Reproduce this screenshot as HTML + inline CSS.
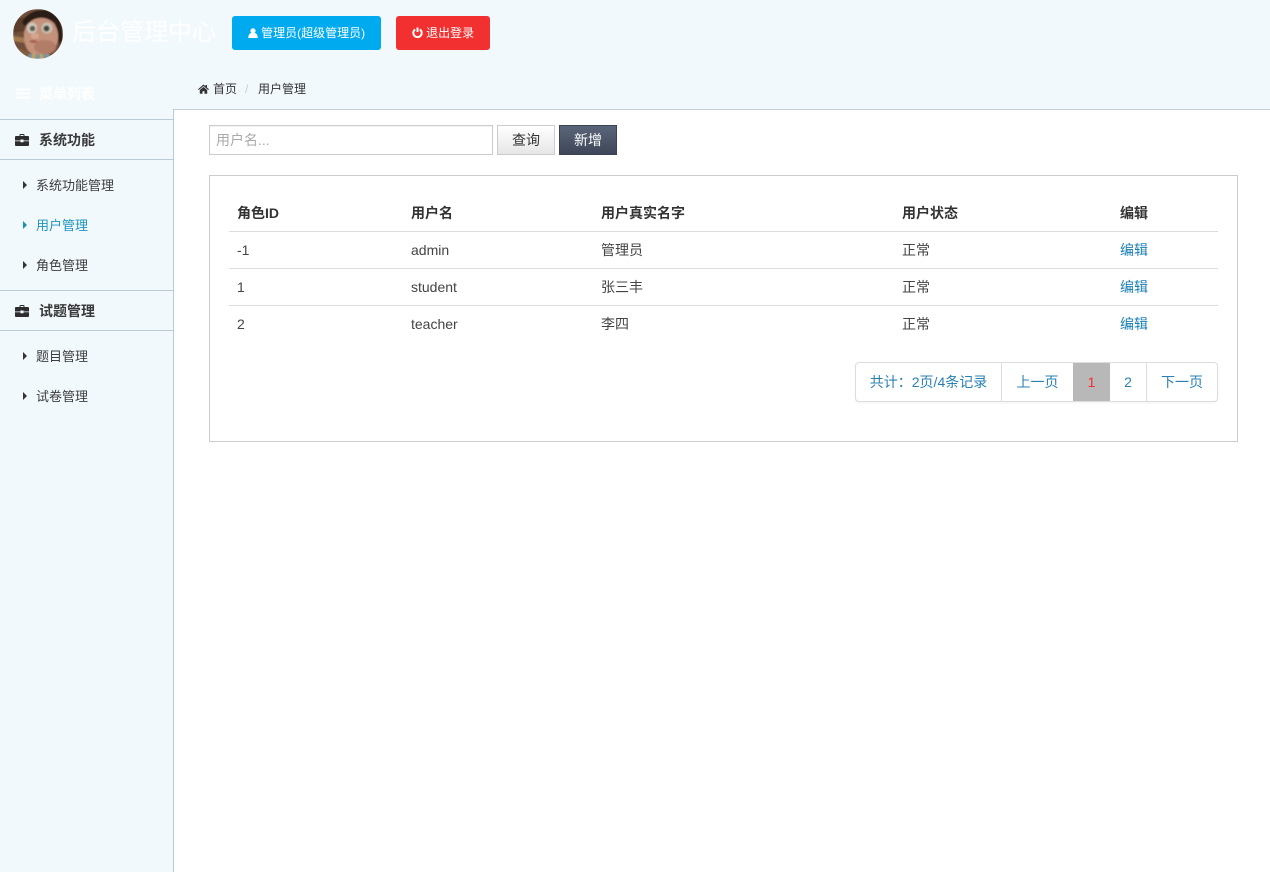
<!DOCTYPE html>
<html lang="zh">
<head>
<meta charset="utf-8">
<title>后台管理中心</title>
<style>
*{box-sizing:border-box}
html,body{margin:0;padding:0;width:1270px;height:872px;overflow:hidden;background:#f2f9fd;font-family:"Liberation Sans","Noto Sans CJK SC",sans-serif;font-size:14px;color:#333}
.a{position:absolute;white-space:nowrap}
.main{left:174px;top:110px;width:1096px;height:762px;background:#fff}
.vl{left:173px;top:109px;width:1px;height:763px;background:#b9cbd6}
.hl{left:173px;top:109px;width:1097px;height:1px;background:#c4ced4}
.sl{left:0;width:173px;height:1px;background:#b9cbd6}
.btn{height:34px;line-height:34px;border-radius:3px;color:#fff;font-size:12px;text-align:center}
.sh{left:39px;font-size:14px;font-weight:bold;line-height:20px;color:#3a3a3a}
.si{left:36px;font-size:13px;line-height:20px;color:#3d3d3d}
.tri{width:0;height:0;border-left:4px solid #333;border-top:4px solid transparent;border-bottom:4px solid transparent;left:23px}
.th{font-size:14px;font-weight:bold;line-height:20px;color:#333}
.td{font-size:14px;line-height:20px;color:#444}
.ln{left:229px;width:989px;height:1px;background:#ddd}
.lk{color:#1a7fb5}
.pg{left:855px;top:362px;width:363px;height:40px;border:1px solid #ddd;border-radius:4px;background:#fff;box-shadow:0 1px 2px rgba(0,0,0,.05)}
.pt{top:364px;height:36px;line-height:36px;font-size:14px;color:#2a80b3;text-align:center}
.ps{top:363px;width:1px;height:38px;background:#ddd}
</style>
</head>
<body>
<div class="a main"></div>
<div class="a vl"></div>
<div class="a hl"></div>

<svg class="a" style="left:13px;top:9px" width="50" height="50" viewBox="0 0 50 50">
<defs>
<clipPath id="c"><circle cx="25" cy="25" r="25"/></clipPath>
<filter id="b" x="-10%" y="-10%" width="120%" height="120%"><feGaussianBlur stdDeviation="0.8"/></filter>
</defs>
<g clip-path="url(#c)">
<g filter="url(#b)">
<rect width="50" height="50" fill="#71503a"/>
<path d="M0 10 L14 8 L12 22 L0 24Z" fill="#5a3d2c"/>
<path d="M0 27 L12 29 L13 34 L0 32Z" fill="#a67a50"/>
<path d="M0 38 L15 43 L15 50 L0 50Z" fill="#85603f"/>
<path d="M9 14 C13 3 26 -1 36 2 C46 6 50 16 50 30 L46 36 L42 14 C34 8 20 8 12 17Z" fill="#2a1d18"/>
<path d="M11 27 C11 15 20 8 30 9 C41 10 46 20 45 30 C44 41 34 48 25 47 C16 46 11 38 11 27Z" fill="#c4927a"/>
<ellipse cx="32" cy="38" rx="11" ry="7" fill="#b27c66"/>
<ellipse cx="19" cy="19" rx="5" ry="5.500" fill="#cfc9bc"/>
<ellipse cx="34" cy="19" rx="5.500" ry="5.500" fill="#c8c2b4"/>
<circle cx="19.500" cy="19.500" r="2.800" fill="#5d5e54"/>
<circle cx="33.500" cy="19.500" r="3" fill="#45453f"/>
<ellipse cx="22" cy="27" rx="4" ry="2.800" fill="#d8a490"/>
<ellipse cx="20.500" cy="32.500" rx="4" ry="1.500" fill="#a9604f"/>
<path d="M13 50 L16 45 L36 45 L38 50Z" fill="#7f9496"/>
<path d="M21 45 L20 50 M28 45 L29 50" stroke="#cfa949" stroke-width="2.500"/>
</g>
</g>
</svg>

<div class="a" style="left:72px;top:16px;font-size:24px;line-height:34px;color:#fff">后台管理中心</div>

<div class="a btn" style="left:232px;top:16px;width:149px;background:#00aaee">
<svg width="10" height="10" viewBox="0 0 10 10" style="vertical-align:-1px"><circle cx="5" cy="2.800" r="2.600" fill="#fff"/><path d="M0.300 10 C0.300 6.300 2 5.200 3 5 L7 5 C8 5.200 9.700 6.300 9.700 10Z" fill="#fff"/></svg>
管理员(超级管理员)</div>
<div class="a btn" style="left:396px;top:16px;width:94px;background:#f23030">
<svg width="11" height="11" viewBox="0 0 11 11" style="vertical-align:-1px"><path d="M3.200 2.400 A4.200 4.200 0 1 0 7.800 2.400" stroke="#fff" stroke-width="2" fill="none"/><path d="M5.500 0.500 V5" stroke="#fff" stroke-width="2"/></svg>
退出登录</div>

<svg class="a" style="left:16px;top:88px" width="14" height="12" viewBox="0 0 14 12"><path d="M0 1.500H14M0 5.500H14M0 9.500H14" stroke="#fff" stroke-width="2"/></svg>
<div class="a" style="left:39px;top:84px;font-size:14px;font-weight:bold;line-height:20px;color:#fff">菜单列表</div>

<svg class="a" style="left:198px;top:84px" width="11" height="10" viewBox="0 0 11 10"><path d="M5.500 0.500 L0 5.200 L0.800 6 L5.500 2 L10.200 6 L11 5.200 L9 3.500 V1 H7.500 V2.200 Z M1.800 6 L5.500 2.900 L9.200 6 V9.800 H6.500 V7.200 H4.500 V9.800 H1.800Z" fill="#333"/></svg>
<div class="a" style="left:213px;top:80px;font-size:12px;line-height:18px;color:#333">首页</div>
<div class="a" style="left:245px;top:80px;font-size:12px;line-height:18px;color:#ccc">/</div>
<div class="a" style="left:258px;top:80px;font-size:12px;line-height:18px;color:#333">用户管理</div>

<div class="a sl" style="top:119px"></div>
<div class="a sl" style="top:159px"></div>
<div class="a sl" style="top:290px"></div>
<div class="a sl" style="top:330px"></div>

<svg class="a" style="left:15px;top:134px" width="14" height="12" viewBox="0 0 14 12"><path d="M4.500 2 V1 Q4.500 0 5.500 0 H8.500 Q9.500 0 9.500 1 V2 H13 Q14 2 14 3 V6.500 H8.500 V5.500 H5.500 V6.500 H0 V3 Q0 2 1 2Z M5.500 1 V2 H8.500 V1Z M0 7.300 H5.500 V8.300 H8.500 V7.300 H14 V11 Q14 12 13 12 H1 Q0 12 0 11Z" fill="#2d2d2d" fill-rule="evenodd"/></svg>
<div class="a sh" style="top:130px">系统功能</div>
<div class="a tri" style="top:181px"></div>
<div class="a si" style="top:176px">系统功能管理</div>
<div class="a tri" style="top:221px;border-left-color:#1a90bd"></div>
<div class="a si" style="top:216px;color:#1f93bd">用户管理</div>
<div class="a tri" style="top:261px"></div>
<div class="a si" style="top:256px">角色管理</div>

<svg class="a" style="left:15px;top:305px" width="14" height="12" viewBox="0 0 14 12"><path d="M4.500 2 V1 Q4.500 0 5.500 0 H8.500 Q9.500 0 9.500 1 V2 H13 Q14 2 14 3 V6.500 H8.500 V5.500 H5.500 V6.500 H0 V3 Q0 2 1 2Z M5.500 1 V2 H8.500 V1Z M0 7.300 H5.500 V8.300 H8.500 V7.300 H14 V11 Q14 12 13 12 H1 Q0 12 0 11Z" fill="#2d2d2d" fill-rule="evenodd"/></svg>
<div class="a sh" style="top:301px">试题管理</div>
<div class="a tri" style="top:352px"></div>
<div class="a si" style="top:347px">题目管理</div>
<div class="a tri" style="top:392px"></div>
<div class="a si" style="top:387px">试卷管理</div>

<div class="a" style="left:209px;top:125px;width:284px;height:30px;border:1px solid #ccc;box-shadow:inset 0 1px 1px rgba(0,0,0,.06);background:#fff;padding-left:6px;line-height:28px;font-size:14px;color:#aaa">用户名...</div>
<div class="a" style="left:497px;top:125px;width:58px;height:30px;border:1px solid #ccc;background:linear-gradient(#fff,#e6e6e6);text-align:center;line-height:28px;font-size:14px;color:#333">查询</div>
<div class="a" style="left:559px;top:125px;width:58px;height:30px;border:1px solid #3a4354;background:linear-gradient(#5b6579,#3e4759);text-align:center;line-height:28px;font-size:14px;color:#fff">新增</div>

<div class="a" style="left:209px;top:175px;width:1029px;height:267px;border:1px solid #ccc;background:#fff"></div>

<div class="a th" style="left:237px;top:203px">角色ID</div>
<div class="a th" style="left:411px;top:203px">用户名</div>
<div class="a th" style="left:601px;top:203px">用户真实名字</div>
<div class="a th" style="left:902px;top:203px">用户状态</div>
<div class="a th" style="left:1120px;top:203px">编辑</div>
<div class="a ln" style="top:231px"></div>

<div class="a td" style="left:237px;top:240px">-1</div>
<div class="a td" style="left:411px;top:240px">admin</div>
<div class="a td" style="left:601px;top:240px">管理员</div>
<div class="a td" style="left:902px;top:240px">正常</div>
<div class="a td lk" style="left:1120px;top:240px">编辑</div>
<div class="a ln" style="top:268px"></div>

<div class="a td" style="left:237px;top:277px">1</div>
<div class="a td" style="left:411px;top:277px">student</div>
<div class="a td" style="left:601px;top:277px">张三丰</div>
<div class="a td" style="left:902px;top:277px">正常</div>
<div class="a td lk" style="left:1120px;top:277px">编辑</div>
<div class="a ln" style="top:305px"></div>

<div class="a td" style="left:237px;top:314px">2</div>
<div class="a td" style="left:411px;top:314px">teacher</div>
<div class="a td" style="left:601px;top:314px">李四</div>
<div class="a td" style="left:902px;top:314px">正常</div>
<div class="a td lk" style="left:1120px;top:314px">编辑</div>

<div class="a pg"></div>
<div class="a" style="left:1073px;top:363px;width:37px;height:38px;background:#b8b8b8"></div>
<div class="a ps" style="left:1001px"></div>
<div class="a ps" style="left:1146px"></div>
<div class="a pt" style="left:856px;width:145px">共计：2页/4条记录</div>
<div class="a pt" style="left:1002px;width:71px">上一页</div>
<div class="a pt" style="left:1073px;width:37px;color:#f2302a">1</div>
<div class="a pt" style="left:1110px;width:36px">2</div>
<div class="a pt" style="left:1147px;width:70px">下一页</div>
</body>
</html>
